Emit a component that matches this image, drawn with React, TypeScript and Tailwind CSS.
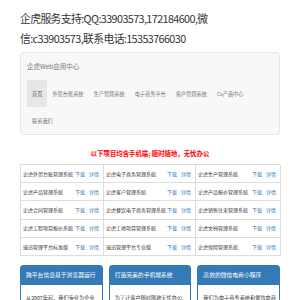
const ROWS: string[][] = [
  ["企虎外贸台账管理系统", "企虎电子商务管理系统", "企虎生产管理系统"],
  ["企虎产品管理系统", "企虎客户管理系统", "企虎产品报价管理系统"],
  ["企虎合同管理系统", "企虎餐饮电子商务管理系统", "企虎销售往来管理系统"],
  ["企虎工程项目报价系统", "企虎工地项目管理系统", "企虎文档管理系统"],
  ["速迅管理平台标准版", "速迅管理平台专业版", "企虎保险管理系统"],
];

const NAV = ["首页", "外贸台账系统", "生产管理系统", "电子商务平台", "客户管理系统", "Cs产品中心", "联系我们"];

const PANELS = [
  { title: "跨平台信息基于浏览器运行", body: "从2007年起，我们专业为企业" },
  { title: "打造完美的手机端系统", body: "为了让客户随时随地无忧办公," },
  { title: "高效的微信电商小程序", body: "我们为电子商务系统和餐饮电商" },
];

export default function App() {
  return (
    <div
      className="h-[300px] w-[300px] overflow-hidden bg-white text-[#333]"
      style={{ fontFamily: '"Noto Sans CJK SC", "Liberation Sans", sans-serif' }}
    >
      <div className="px-5 pt-[8px] text-[10.8px] leading-[20px] tracking-[-0.6px]">
        企虎服务支持:QQ:33903573,172184600,微
        <br />
        信:c33903573,联系电话:15353766030
      </div>

      <div className="mx-5 mt-[4px] rounded-[4px] border border-[#e7e7e7] bg-[#f8f8f8] px-[6px]">
        <div className="flex h-[27px] items-center text-[6.5px] text-[#777]">企虎Web应用中心</div>
        <div className="flex flex-wrap text-[5.2px] text-[#777]">
          {NAV.map((n, i) => (
            <div
              key={n}
              className={`flex h-[27px] items-center px-[5px] ${i === 0 ? "bg-[#e7e7e7] text-[#555]" : ""}`}
            >
              {n}
            </div>
          ))}
        </div>
      </div>

      <div className="mt-[14px] text-center text-[6.4px] font-bold leading-[10px] text-[#f00]">
        以下项目均含手机端; 随时随地，无忧办公
      </div>

      <div className="mx-5 mt-[5px] grid grid-cols-[83px_92px_85px] border-t border-l border-[#ddd] text-[5px]">
        {ROWS.flat().map((name, i) => (
          <div key={i} className="flex h-[18.2px] items-center border-r border-b border-[#ddd] pl-[2px] pr-[4px]">
            <span className="flex-1 whitespace-nowrap">{name}</span>
            <span className="text-[#337ab7]">下载</span>
            <span className="ml-[4px] text-[#337ab7]">详情</span>
          </div>
        ))}
      </div>

      <div className="mx-5 mt-[9px] grid grid-cols-3 gap-[6px]">
        {PANELS.map((p) => (
          <div key={p.title} className="rounded-[3px] border border-[#337ab7] bg-white">
            <div className="flex h-[19px] items-center whitespace-nowrap bg-[#337ab7] px-[5px] text-[5.8px] text-white">
              {p.title}
            </div>
            <div className="whitespace-nowrap px-[5px] pt-[9px] text-[5.2px] leading-[8px]">{p.body}</div>
          </div>
        ))}
      </div>
    </div>
  );
}
